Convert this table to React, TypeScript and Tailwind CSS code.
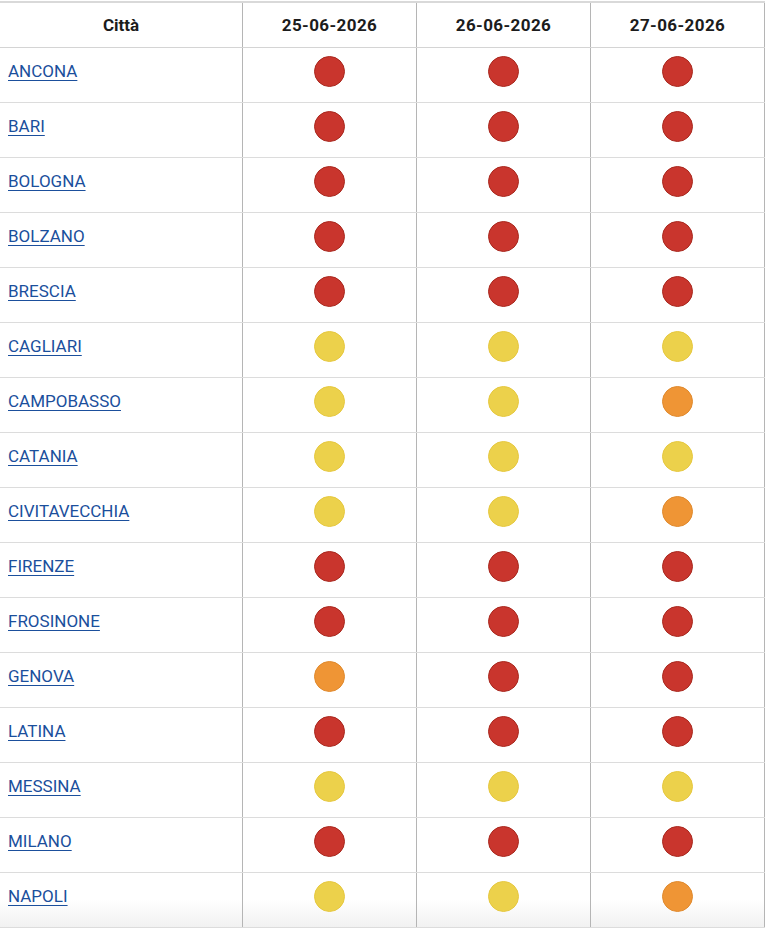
import React from "react"

type Level = "r" | "y" | "o"

const rows: [string, Level, Level, Level][] = [
  ["ANCONA", "r", "r", "r"],
  ["BARI", "r", "r", "r"],
  ["BOLOGNA", "r", "r", "r"],
  ["BOLZANO", "r", "r", "r"],
  ["BRESCIA", "r", "r", "r"],
  ["CAGLIARI", "y", "y", "y"],
  ["CAMPOBASSO", "y", "y", "o"],
  ["CATANIA", "y", "y", "y"],
  ["CIVITAVECCHIA", "y", "y", "o"],
  ["FIRENZE", "r", "r", "r"],
  ["FROSINONE", "r", "r", "r"],
  ["GENOVA", "o", "r", "r"],
  ["LATINA", "r", "r", "r"],
  ["MESSINA", "y", "y", "y"],
  ["MILANO", "r", "r", "r"],
  ["NAPOLI", "y", "y", "o"],
]

const dates = ["25-06-2026", "26-06-2026", "27-06-2026"]

function Dot({ level }: { level: Level }) {
  if (level === "r") {
    return <span className="block h-[31px] w-[31px] rounded-full border border-[#a9291f] bg-[#c9352d]" />
  }
  if (level === "o") {
    return <span className="block h-[31px] w-[31px] rounded-full border border-[#e08a2e] bg-[#ef9535]" />
  }
  return <span className="block h-[31px] w-[31px] rounded-full border border-[#e6c840] bg-[#ecd14b]" />
}

export default function App() {
  return (
    <div className="min-h-[931px] bg-white pt-px font-['Roboto',_'Noto_Sans',_sans-serif]">
      <div className="w-[765px] border-t-2 border-[#d9d9d9]">
        <div className="grid h-[45px] grid-cols-[243px_174px_174px_174px] border-b border-[#d4d4d4]">
          <div className="flex items-center justify-center border-r border-[#b5b5b5] pt-px text-[17px] font-bold text-[#1c1c1c]">
            Città
          </div>
          {dates.map((d) => (
            <div
              key={d}
              className="flex items-center justify-center border-r border-[#b5b5b5] pt-px text-[17px] font-bold tracking-[0.4px] text-[#1c1c1c]"
            >
              {d}
            </div>
          ))}
        </div>
        {rows.map(([city, a, b, c], i) => (
          <div
            key={city}
            className={
              "grid h-[55px] grid-cols-[243px_174px_174px_174px] border-b border-[#dcdcdc] " +
              (i === rows.length - 1 ? "bg-gradient-to-b from-white from-50% to-[#f1f1f1]" : "")
            }
          >
            <div className="flex items-center border-r border-[#b5b5b5] pb-[7px] pl-2">
              <a href="#" className="text-[17px] text-[#1b4f9c] underline underline-offset-[3px]">
                {city}
              </a>
            </div>
            {[a, b, c].map((l, j) => (
              <div key={j} className="flex items-center justify-center border-r border-[#b5b5b5] pb-[7px]">
                <Dot level={l} />
              </div>
            ))}
          </div>
        ))}
      </div>
    </div>
  )
}
